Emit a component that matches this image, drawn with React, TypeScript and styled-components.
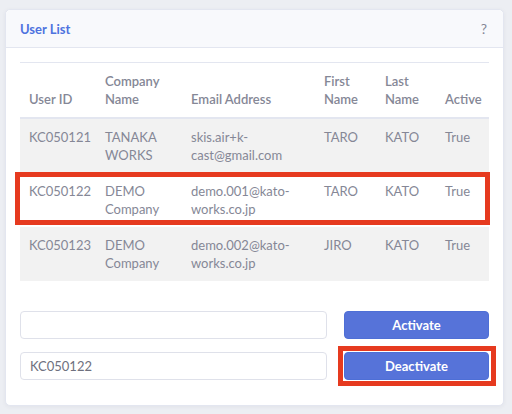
import React from 'react';
import styled, { createGlobalStyle } from 'styled-components';

const GlobalStyle = createGlobalStyle`
  html, body {
    margin: 0;
    padding: 0;
    background: #eceef3;
    font-family: 'Lato', 'Noto Sans', sans-serif;
  }
`;

const Page = styled.div`
  padding: 9px 8px 9px 5px;
`;

const Card = styled.div`
  background: #fff;
  border: 1px solid #e3e6f0;
  border-radius: 5px;
  box-shadow: 0 1px 4px rgba(58, 59, 69, 0.06);
`;

const CardHeader = styled.div`
  display: flex;
  align-items: center;
  justify-content: space-between;
  height: 37px;
  padding: 0 16px 0 14px;
  background: #f8f9fc;
  border-bottom: 1px solid #e3e6f0;
  border-radius: 5px 5px 0 0;
`;

const Title = styled.h6`
  margin: 0;
  font-size: 13px;
  font-weight: 700;
  color: #4e73df;
`;

const Help = styled.span`
  font-size: 14px;
  color: #858796;
`;

const CardBody = styled.div`
  padding: 14px 14px 25px 14px;
`;

const TableWrap = styled.div`
  position: relative;
`;

const Table = styled.table`
  width: 100%;
  border-collapse: collapse;
  table-layout: fixed;
  font-size: 13px;
  line-height: 18px;
  color: #858796;
`;

const Th = styled.th`
  text-align: left;
  vertical-align: bottom;
  font-weight: 600;
  padding: 9px 9px;
  border-top: 1px solid #e3e6f0;
  border-bottom: 2px solid #e3e6f0;
`;

const Row = styled.tr<{ $striped: boolean }>`
  background: ${p => (p.$striped ? '#f2f2f2' : '#fff')};
`;

const Td = styled.td`
  vertical-align: top;
  padding: 9px 9px;
`;

const Annotation = styled.div`
  position: absolute;
  border: 5px solid #e63a1f;
  pointer-events: none;
`;

const Form = styled.div`
  display: grid;
  grid-template-columns: 1fr 145px;
  column-gap: 17px;
  row-gap: 13px;
  margin-top: 30px;
`;

const Input = styled.input`
  box-sizing: border-box;
  height: 28px;
  padding: 0 9px;
  border: 1px solid #dfe1ea;
  border-radius: 4px;
  font-family: inherit;
  font-size: 13px;
  color: #6e707e;
  background: #fff;
  outline: none;
`;

const ButtonSlot = styled.div`
  position: relative;
  display: flex;
`;

const Button = styled.button`
  flex: 1;
  height: 28px;
  border: 1px solid #4e6fd6;
  border-radius: 4px;
  background: #5673d9;
  color: #fff;
  font-family: inherit;
  font-size: 13px;
  font-weight: 700;
  cursor: pointer;
`;

const users = [
  { id: 'KC050121', company: 'TANAKA WORKS', email: 'skis.air+k-\u200bcast@gmail.com', first: 'TARO', last: 'KATO', active: 'True' },
  { id: 'KC050122', company: 'DEMO Company', email: 'demo.001@kato-\u200bworks.co.jp', first: 'TARO', last: 'KATO', active: 'True' },
  { id: 'KC050123', company: 'DEMO Company', email: 'demo.002@kato-\u200bworks.co.jp', first: 'JIRO', last: 'KATO', active: 'True' },
];

const widths = [76, 86, 133, 61, 60, 53];

export default function App() {
  return (
    <>
      <GlobalStyle />
      <Page>
        <Card>
          <CardHeader>
            <Title>User List</Title>
            <Help>?</Help>
          </CardHeader>
          <CardBody>
            <TableWrap>
              <Table>
                <colgroup>
                  {widths.map((w, i) => <col key={i} style={{ width: w }} />)}
                </colgroup>
                <thead>
                  <tr>
                    <Th>User ID</Th>
                    <Th>Company Name</Th>
                    <Th>Email Address</Th>
                    <Th>First Name</Th>
                    <Th>Last Name</Th>
                    <Th>Active</Th>
                  </tr>
                </thead>
                <tbody>
                  {users.map((u, i) => (
                    <Row key={u.id} $striped={i % 2 === 0}>
                      <Td>{u.id}</Td>
                      <Td>{u.company}</Td>
                      <Td>{u.email}</Td>
                      <Td>{u.first}</Td>
                      <Td>{u.last}</Td>
                      <Td>{u.active}</Td>
                    </Row>
                  ))}
                </tbody>
              </Table>
              <Annotation style={{ left: -5, top: 110, width: 465, height: 43 }} />
            </TableWrap>
            <Form>
              <Input defaultValue="" />
              <ButtonSlot>
                <Button>Activate</Button>
              </ButtonSlot>
              <Input defaultValue="KC050122" />
              <ButtonSlot>
                <Button>Deactivate</Button>
                <Annotation style={{ left: -6, top: -6, right: -7, bottom: -6 }} />
              </ButtonSlot>
            </Form>
          </CardBody>
        </Card>
      </Page>
    </>
  );
}
